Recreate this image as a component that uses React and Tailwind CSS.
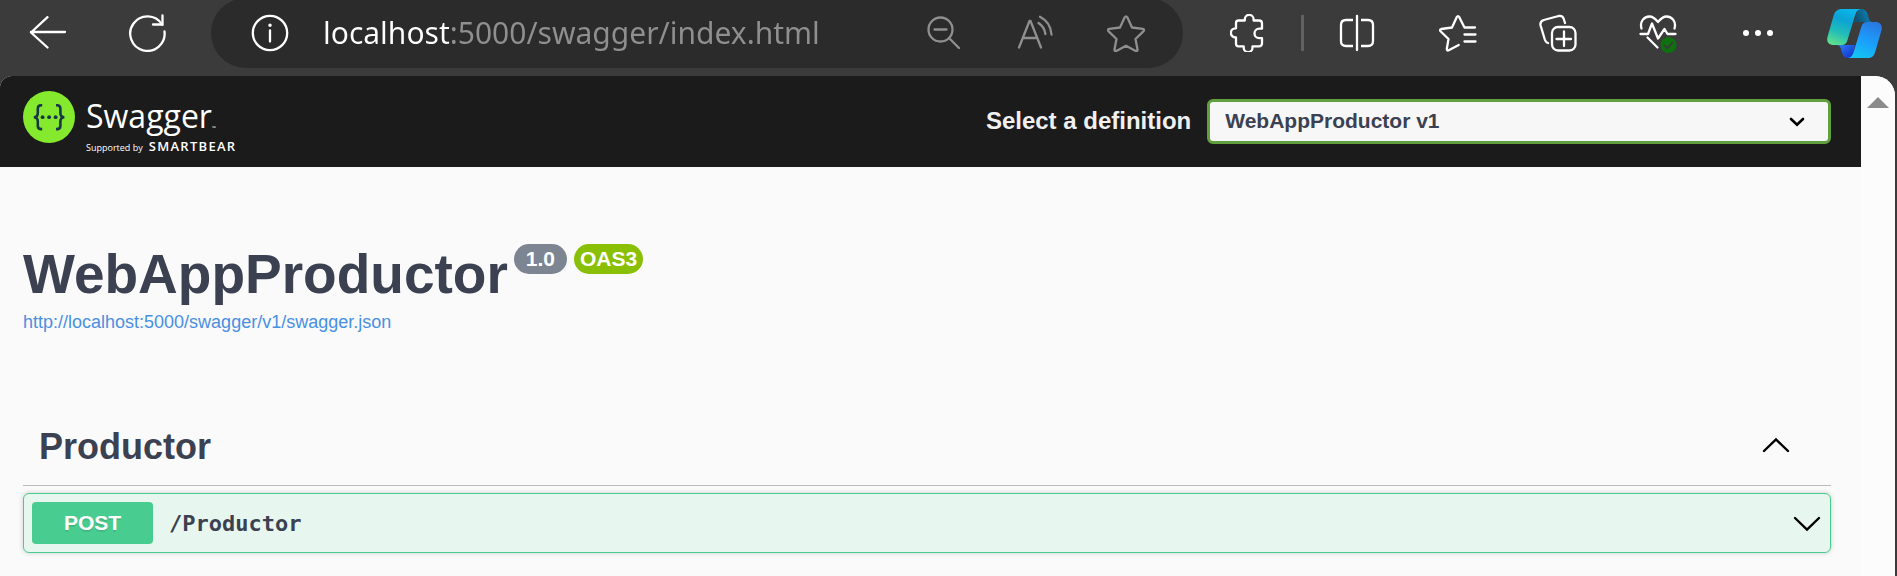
import React from 'react';

function Glyph({ w, h, className = '', children }) {
  return (
    <svg
      width={w}
      height={h}
      viewBox={`0 0 ${w} ${h}`}
      fill="none"
      stroke="currentColor"
      strokeWidth="2.300"
      strokeLinecap="round"
      strokeLinejoin="round"
      className={`shrink-0 ${className}`}
      aria-hidden="true"
    >
      {children}
    </svg>
  );
}

function ToolButton({ label, className, children }) {
  return (
    <button type="button" aria-label={label} className={`flex h-full shrink-0 items-center justify-center ${className}`}>
      {children}
    </button>
  );
}

function CopilotLogo() {
  return (
    <svg width="55" height="49" viewBox="0 0 55 49" aria-hidden="true">
      <defs>
        <linearGradient id="cpLeft" x1="22" y1="0" x2="8" y2="36" gradientUnits="userSpaceOnUse">
          <stop offset="0" stopColor="#0cb6ea" />
          <stop offset="0.3" stopColor="#0ba3d6" />
          <stop offset="0.65" stopColor="#21bcb8" />
          <stop offset="1" stopColor="#5fe08c" />
        </linearGradient>
        <linearGradient id="cpRight" x1="46" y1="13" x2="32" y2="49" gradientUnits="userSpaceOnUse">
          <stop offset="0" stopColor="#2a78e0" />
          <stop offset="0.5" stopColor="#1b9dfb" />
          <stop offset="1" stopColor="#14c3f4" />
        </linearGradient>
        <linearGradient id="cpFoldTop" x1="30" y1="10" x2="43" y2="4" gradientUnits="userSpaceOnUse">
          <stop offset="0" stopColor="#0d5277" />
          <stop offset="1" stopColor="#0b84b4" />
        </linearGradient>
        <linearGradient id="cpFoldBottom" x1="15" y1="37" x2="24" y2="48" gradientUnits="userSpaceOnUse">
          <stop offset="0" stopColor="#2872ee" />
          <stop offset="1" stopColor="#1537cf" />
        </linearGradient>
      </defs>
      <path d="M31 0h3c3.500 0 5.500 1.500 6.500 5l1.300 4.500c.7 2.300 1.700 3.500 4.200 3.500H27z" fill="url(#cpFoldTop)" />
      <path d="M28 36H9c2.500 0 4 1 4.800 3.600l1.500 4.900c1 3 2.700 4.500 5.700 4.500h4z" fill="url(#cpFoldBottom)" />
      <path d="M15 0h20c-3.500 0-5.700 2-7 6.500L20.500 31c-1 3.500-2.500 5-6 5H6.500C1.500 36-.8 32.500.6 27.500L6.500 7C8 2 10.500 0 15 0z" fill="url(#cpLeft)" />
      <path d="M41 49H20c3.500 0 5.500-2 6.800-6.500L34.300 18c1-3.500 2.600-5 6-5h8c5 0 7.500 3.500 6.100 8.500L48.500 42c-1.500 5-3.500 7-7.500 7z" fill="url(#cpRight)" />
    </svg>
  );
}

function BrowserToolbar() {
  return (
    <header className="overflow-hidden pb-2 text-white">
      <div className="-mt-0.5 flex h-[70px] items-center">
        <ToolButton label="Back" className="w-24">
          <Glyph w={38} h={34}>
            <path d="M36 16H2M18.500 1.200L2 16.500l16.500 15" />
          </Glyph>
        </ToolButton>
        <ToolButton label="Refresh" className="w-[102px]">
          <Glyph w={38} h={38}>
            <path d="M36.500 17.500A17.200 17.200 0 1 1 34 10.500" />
            <path d="M34.500 1.500V10.500H25" strokeLinejoin="miter" />
          </Glyph>
        </ToolButton>
        <div className="ml-[13px] flex h-full min-w-0 flex-1 items-center rounded-full bg-[#2b2b2b] pr-3 pl-3.5 text-[#8f8f8f]">
          <ToolButton label="Site information" className="w-[90px] text-white">
            <Glyph w={38} h={38}>
              <circle cx="19" cy="19" r="17.200" />
              <path d="M19 16.500v11" />
              <circle cx="19" cy="11.300" r="1" fill="currentColor" strokeWidth="1.500" />
            </Glyph>
          </ToolButton>
          <input
            type="text"
            aria-label="Address"
            defaultValue="localhost:5000/swagger/index.html"
            className="ml-2 h-[50px] min-w-0 flex-1 bg-[linear-gradient(90deg,#ffffff_126px,#8f8f8f_126px)] bg-clip-text pb-0.5 font-['Noto_Sans',sans-serif] text-[30px] text-transparent caret-white outline-none"
          />
          <ToolButton label="Zoom out" className="w-[91px]">
            <Glyph w={34} h={34}>
              <circle cx="13.500" cy="13.500" r="12" />
              <path d="M7.500 13.500h12M22.500 22.500L32 32" />
            </Glyph>
          </ToolButton>
          <ToolButton label="Read aloud" className="w-[91px]">
            <Glyph w={36} h={36}>
              <path d="M2 32.500L12.500 6h1L24 32.500M6 23h14" />
              <path d="M21.500 8c4 2.500 6.200 6 6.900 11M23 1.800C30 5.500 34 11.500 34.500 19.500" />
            </Glyph>
          </ToolButton>
          <ToolButton label="Add to favorites" className="w-[91px]">
            <Glyph w={38} h={38}>
              <path d="M17.700 3.300q1.300-2 2.600 0L25 13.500l10.800 1.300q2.200.6.800 2.300L28.500 25l2 10.500q.2 2.200-1.800 1.400L19 31.800l-9.700 5.100q-2 .8-1.800-1.400l2-10.500-8.100-7.900q-1.400-1.700.8-2.300L13 13.500z" />
            </Glyph>
          </ToolButton>
        </div>
        <ToolButton label="Extensions" className="ml-3.5 w-[100px]">
          <Glyph w={34} h={38}>
            <path d="M8 6.500h6.500c.5 0 .3-.8.300-1.200a4.400 4.400 0 0 1 8.800 0c0 .4-.2 1.200.3 1.200H29q3 0 3 3v5.200h-2.800a4.700 4.700 0 0 0 0 9.400H32v5.200q0 3-3 3h-6.500v1.400a4.400 4.400 0 0 1-8.800 0v-1.400H8.500q-2.500 0-2.500-2.500v-6.300H5.500a4.600 4.600 0 0 1 0-9.200H6V9q0-2.500 2.500-2.500" />
          </Glyph>
        </ToolButton>
        <span className="mx-1 h-9 w-[3px] shrink-0 bg-[#626262]" />
        <ToolButton label="Split screen" className="w-[100px]">
          <Glyph w={38} h={38}>
            <path d="M18 2v34" />
            <path d="M14 6H7Q2 6 2 11v16q0 5 5 5h7M22 6h7q5 0 5 5v16q0 5-5 5h-7" strokeLinecap="butt" />
          </Glyph>
        </ToolButton>
        <ToolButton label="Favorites" className="w-[100px]">
          <Glyph w={38} h={38}>
            <path d="M36 13.500H25.500L20.300 3.200q-1.300-2-2.600 0L13 13.500 2.300 15q-2 .6-.8 2.200L9.500 25 7.800 34.800q0 2.300 1.900 1.500l10-5.300M25.500 20.500H36.500M25.500 27.500H36.500" />
          </Glyph>
        </ToolButton>
        <ToolButton label="Collections" className="w-[100px]">
          <Glyph w={38} h={38}>
            <rect x="13" y="13" width="23.500" height="23.500" rx="6" />
            <path d="M25 17.500v14.500M17.500 25h14.500" />
            <path d="M26 9l-1.200-4q-1.200-3.800-5.200-3L4.800 6Q.6 7.500 1.600 11.500l4.200 14Q6.800 28.500 9 29" />
          </Glyph>
        </ToolButton>
        <ToolButton label="Browser essentials" className="w-[100px]">
          <Glyph w={38} h={40}>
            <path d="M2.500 15.500C.5 8.500 5 3.500 10.500 3.500c4 0 6 2.500 8.500 5.500 2.500-3 4.500-5.500 8.500-5.500 5.500 0 10 5 8 12" />
            <path d="M1.500 21H9l4-10.500 6 15L25.500 16l3 5h8M8.500 24.500l10 10" />
            <circle cx="29.500" cy="32" r="8" fill="#0f700f" stroke="none" />
            <path d="M25.500 32.500l2.800 2.800 5.200-5.600" stroke="#3b3b3b" strokeWidth="1.800" />
          </Glyph>
        </ToolButton>
        <ToolButton label="Settings and more" className="w-[100px]">
          <Glyph w={32} h={6}>
            <g fill="currentColor" stroke="none">
              <circle cx="4" cy="3" r="3" />
              <circle cx="16" cy="3" r="3" />
              <circle cx="28" cy="3" r="3" />
            </g>
          </Glyph>
        </ToolButton>
        <ToolButton label="Copilot" className="w-[89px] pl-1">
          <CopilotLogo />
        </ToolButton>
      </div>
    </header>
  );
}

function SwaggerLogo() {
  return (
    <a href="#" aria-label="Swagger" className="flex h-[61px] shrink-0 items-start gap-[11px] font-['Open_Sans',sans-serif] text-white">
      <svg width="52" height="52" viewBox="0 0 52 52" aria-hidden="true">
        <circle cx="26" cy="26" r="26" fill="#85ea2d" />
        <g fill="none" stroke="#173647" strokeWidth="2.600">
          <path d="M19.200 14.300h-1c-2.600 0-3.400 1.200-3.400 3.400v4.200c0 2.800-1 4.300-4 4.300 3 0 4 1.500 4 4.300v4.200c0 2.200.8 3.400 3.400 3.400h1" />
          <path d="M33 14.300h1c2.600 0 3.400 1.200 3.400 3.400v4.200c0 2.800 1 4.300 4 4.300-3 0-4 1.500-4 4.300v4.200c0 2.200-.8 3.400-3.400 3.400h-1" />
        </g>
        <g fill="#173647">
          <circle cx="19.600" cy="26.200" r="1.900" />
          <circle cx="26.100" cy="26.200" r="1.900" />
          <circle cx="32.600" cy="26.200" r="1.900" />
        </g>
      </svg>
      <span className="flex flex-col">
        <span className="flex items-end">
          <span className="text-[32px] leading-[50px]">Swagger</span>
          <span className="text-[5px] leading-[26px]">™</span>
        </span>
        <span className="flex items-baseline gap-1.5">
          <span className="text-[9px] leading-[10px]">Supported by</span>
          <span className="text-[13px] leading-[10px] font-semibold tracking-widest">SMARTBEAR</span>
        </span>
      </span>
    </a>
  );
}

function Chevron({ className = '' }) {
  return (
    <svg width="28" height="16" viewBox="0 0 28 16" fill="none" stroke="#000" strokeWidth="2.400" strokeLinecap="round" className={`shrink-0 ${className}`} aria-hidden="true">
      <path d="M2 2l12 11.500L26 2" />
    </svg>
  );
}

function Topbar() {
  return (
    <div className="flex h-[91px] items-center justify-between bg-[#1b1b1b] pr-[30px] pl-[23px]">
      <SwaggerLogo />
      <form className="flex w-1/2 items-center justify-end gap-4">
        <label htmlFor="definition" className="pb-0.5 text-2xl font-bold whitespace-nowrap text-[#f0f0f0]">
          Select a definition
        </label>
        <div className="relative w-[69%]">
          <select
            id="definition"
            className="block h-[45px] w-full appearance-none rounded-md border-3 border-[#62a03f] bg-[#f7f7f7] pr-12 pb-0.5 pl-[15px] text-[21px] font-bold text-[#3b4151] outline-none"
          >
            <option>WebAppProductor v1</option>
          </select>
          <svg width="16" height="10" viewBox="0 0 16 10" fill="none" stroke="#000" strokeWidth="2.600" strokeLinecap="round" className="pointer-events-none absolute top-[18px] right-[26px]" aria-hidden="true">
            <path d="M2 2l6 5.800L14 2" />
          </svg>
        </div>
      </form>
    </div>
  );
}

function ApiInfo() {
  return (
    <section>
      <div className="flex items-start gap-1.5">
        <h1 className="text-[55px] leading-[62px] font-bold">WebAppProductor</h1>
        <div className="mt-px flex gap-[7px] text-[21px] leading-[30px] font-bold text-white">
          <span className="rounded-full bg-[#7d8492] px-3">1.0</span>
          <span className="rounded-full bg-[#89bf04] px-1.5">OAS3</span>
        </div>
      </div>
      <a href="#" className="mt-[7px] block w-fit text-lg leading-5 text-[#4990e2]">
        http://localhost:5000/swagger/v1/swagger.json
      </a>
    </section>
  );
}

function TagSection() {
  return (
    <section className="mt-[84px]">
      <button type="button" className="flex w-full items-center justify-between border-b border-[#bbbbbf] pt-2.5 pr-[41px] pb-[17px] pl-4 text-left">
        <span className="text-4xl leading-[42px] font-bold">Productor</span>
        <Chevron className="mb-1 rotate-180" />
      </button>
      <button type="button" className="mt-[7px] flex h-[60px] w-full items-center rounded-md border border-[#49cc90] bg-[#e7f6ee] pr-[9px] pl-2 text-left shadow-[0_0_5px_rgba(0,0,0,0.19)]">
        <span className="w-[121px] rounded bg-[#49cc90] text-center text-[21px] leading-[42px] font-bold text-white [text-shadow:0_2px_0_rgba(0,0,0,0.1)]">
          POST
        </span>
        <span className="ml-4 flex-1 font-['DejaVu_Sans_Mono',monospace] text-[22px] font-bold">/Productor</span>
        <Chevron className="mt-0.5" />
      </button>
    </section>
  );
}

export default function App() {
  return (
    <div className="flex min-h-screen flex-col bg-[#3b3b3b] font-['Liberation_Sans',Arial,sans-serif] text-[#3b4151]">
      <BrowserToolbar />
      <div className="mr-0.5 flex flex-1 overflow-hidden rounded-tl-xl rounded-tr-[20px] bg-[#fafafa]">
        <main className="min-w-0 flex-1">
          <Topbar />
          <div className="pt-[76px] pr-[30px] pl-[23px]">
            <ApiInfo />
            <TagSection />
          </div>
        </main>
        <div className="flex w-[34px] shrink-0 justify-center bg-[#fcfcfc] pt-[21px]">
          <svg width="22" height="11" viewBox="0 0 22 11" fill="#8b8b8b" aria-hidden="true">
            <path d="M11 0l11 11H0z" />
          </svg>
        </div>
      </div>
    </div>
  );
}
